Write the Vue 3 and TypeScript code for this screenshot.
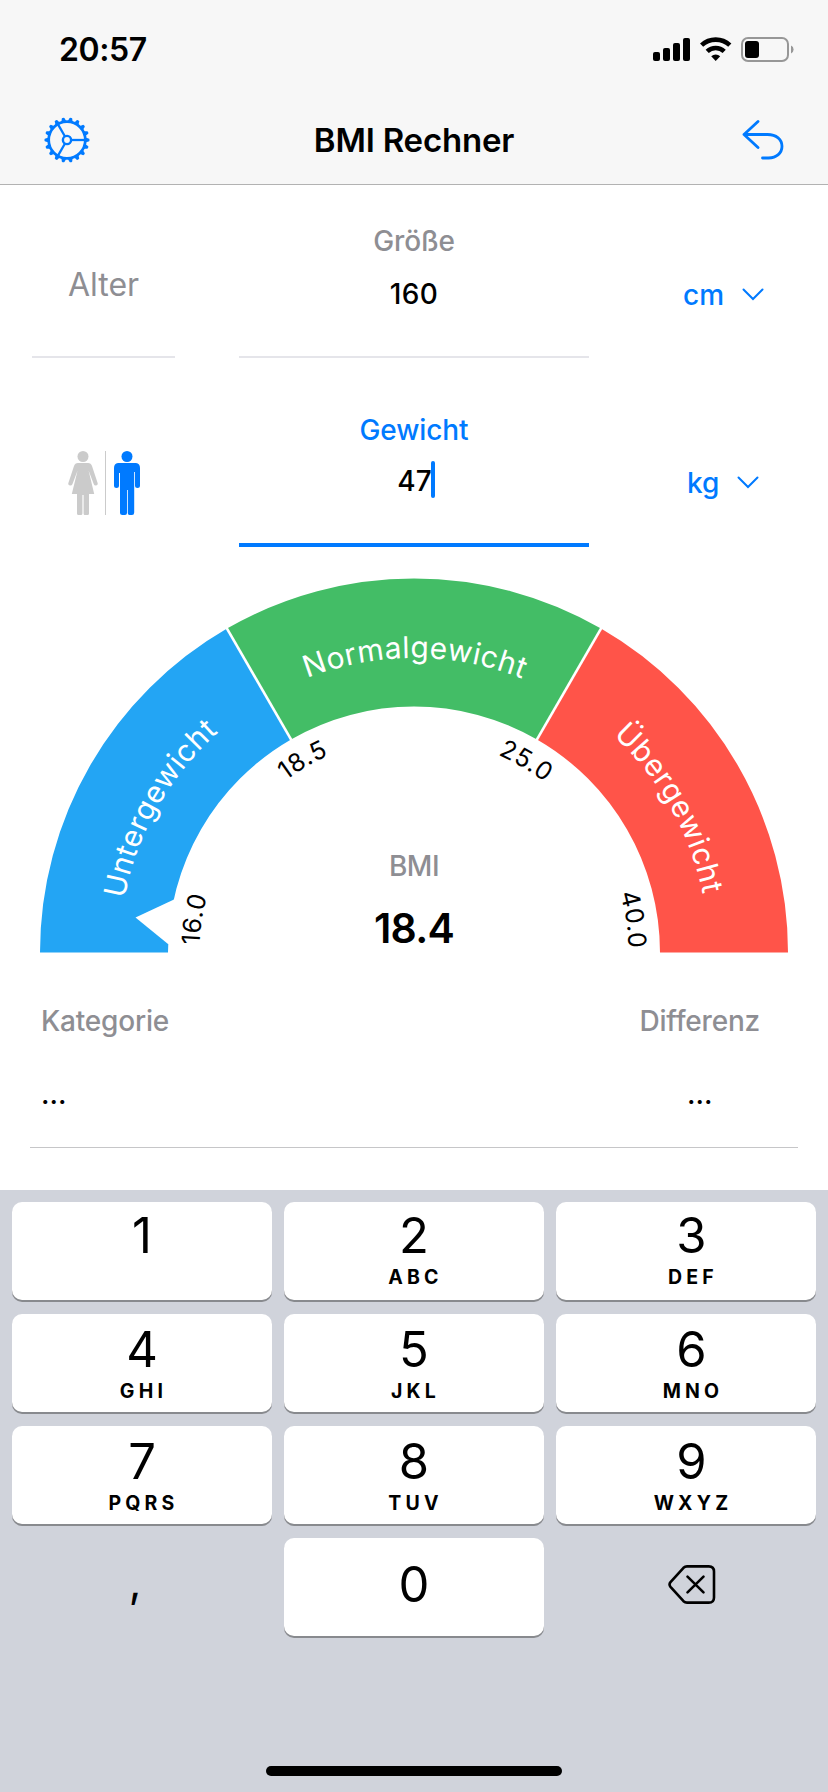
<script setup lang="ts">
interface PadKey {
  digit: string
  letters: string
}

interface Mark {
  text: string
  angle: number
}

const keys: PadKey[] = [
  { digit: '1', letters: '' },
  { digit: '2', letters: 'ABC' },
  { digit: '3', letters: 'DEF' },
  { digit: '4', letters: 'GHI' },
  { digit: '5', letters: 'JKL' },
  { digit: '6', letters: 'MNO' },
  { digit: '7', letters: 'PQRS' },
  { digit: '8', letters: 'TUV' },
  { digit: '9', letters: 'WXYZ' },
]

// Gauge geometry: angles run in degrees from the left end of the half circle.
const cx = 374
const cy = 374.5
const outer = 374
const inner = 246

function point(radius: number, angle: number): string {
  const a = (angle * Math.PI) / 180
  return `${(cx - radius * Math.cos(a)).toFixed(2)} ${(cy - radius * Math.sin(a)).toFixed(2)}`
}

function sector(from: number, to: number): string {
  return `M${point(outer, from)} A${outer} ${outer} 0 0 1 ${point(outer, to)} L${point(inner, to)} A${inner} ${inner} 0 0 0 ${point(inner, from)} Z`
}

function arc(radius: number, centre: number): string {
  return `M${point(radius, centre - 40)} A${radius} ${radius} 0 0 1 ${point(radius, centre + 40)}`
}

function divider(angle: number): string {
  return `M${point(inner - 2, angle)} L${point(outer + 2, angle)}`
}

const sectors = [
  { id: 'under', text: 'Untergewicht', from: 0, to: 60, label: 29.5, color: '#23a5f4' },
  { id: 'normal', text: 'Normalgewicht', from: 60, to: 120, label: 90.2, color: '#43bd66' },
  { id: 'over', text: 'Übergewicht', from: 120, to: 180, label: 150.6, color: '#ff5449' },
]

const marks: Mark[] = [
  { text: '16.0', angle: 8.7 },
  { text: '18.5', angle: 60 },
  { text: '25.0', angle: 120.4 },
  { text: '40.0', angle: 171.5 },
]

const teeth = Array.from({ length: 18 }, (_, i) => i * 20)
</script>

<template>
  <div class="screen">
    <header class="top">
      <div class="status">
        <span class="time">20:57</span>
        <svg class="indicators" width="144" height="28" viewBox="0 0 144 28">
          <rect x="3" y="16" width="7" height="9" rx="2" />
          <rect x="13" y="12" width="7" height="13" rx="2" />
          <rect x="23" y="7" width="7" height="18" rx="2" />
          <rect x="33" y="2" width="7" height="23" rx="2" />
          <g fill="none" stroke="#000" stroke-width="4.6">
            <path d="M51.6 9.2 A20.5 20.5 0 0 1 79.8 9.2" />
            <path d="M57.2 15.4 A12.4 12.4 0 0 1 74.2 15.4" />
          </g>
          <path d="M61.2 20.2 A7 7 0 0 1 70.2 20.2 L65.7 24.9 Z" />
          <rect x="92" y="2" width="46" height="23" rx="6" fill="none" stroke="#979797" stroke-width="2" />
          <rect x="95" y="5" width="14" height="17" rx="3" />
          <path d="M141 9.5 A4.4 4.4 0 0 1 141 17.5 Z" fill="#979797" />
        </svg>
      </div>
      <div class="navbar">
        <svg class="gear" width="48" height="48" viewBox="-24 -24 48 48">
          <g fill="#007aff">
            <path
              v-for="t in teeth"
              :key="t"
              d="M18.5 -2.5 L22.2 -1.300 Q23 0 22.2 1.300 L18.5 2.5 Z"
              :transform="`rotate(${t})`"
            />
          </g>
          <circle r="18.3" fill="#f7f7f7" stroke="#007aff" stroke-width="2.7" />
          <g stroke="#007aff" stroke-width="2.3">
            <path v-for="a in [0, 120, 240]" :key="a" d="M4 0 H18" :transform="`rotate(${a})`" />
          </g>
          <circle r="4.1" fill="#f7f7f7" stroke="#007aff" stroke-width="2.4" />
        </svg>
        <h1>BMI Rechner</h1>
        <svg class="undo" width="44" height="42" viewBox="0 0 44 42">
          <path
            d="M17 2.5 L3 15.5 L17 28.5 M3 15.5 H26.5 C35.5 15.5 41 20.5 41 27.2 C41 34 35.5 39 27.5 39 H21.5"
            fill="none" stroke="#007aff" stroke-width="2.8" stroke-linecap="round" stroke-linejoin="round"
          />
        </svg>
      </div>
    </header>

    <section class="form">
      <div class="age">Alter</div>
      <div class="field">
        <label>Größe</label>
        <span class="value">160</span>
      </div>
      <div class="unit unit-cm">
        <span>cm</span>
        <svg width="22" height="14" viewBox="0 0 22 14"><path d="M1.5 1.5 L11 11 L20.5 1.5" /></svg>
      </div>

      <div class="gender">
        <svg width="74" height="66" viewBox="0 0 74 66">
          <g fill="#cbcbcb">
            <circle cx="16" cy="6.5" r="5.5" />
            <path d="M11 13 H21 Q24 13 25 16 L30.7 33.2 Q31 35 29 35.5 Q27.4 35.7 26.7 34 L21.6 20.5 L27.2 44 H22 V63.5 Q22 65 20.5 65 H17.8 Q16.6 65 16.6 63.5 V45 H15.4 V63.5 Q15.4 65 14 65 H11.5 Q10 65 10 63.5 V44 H4.8 L10.6 20.5 L5.5 34 Q4.8 35.7 3 35.5 Q1 35 1.3 33.2 L7 16 Q8 13 11 13 Z" />
            <rect x="38" y="1" width="1" height="64" />
          </g>
          <g fill="#007aff">
            <circle cx="60" cy="6.5" r="5.5" />
            <path d="M51 13 H69 Q73 13.600 73 18 V35.500 Q73 38 70.500 38 Q68 38 68 35.500 V22 H67.200 V62.500 Q67.200 65 65 65 H62.500 Q60.800 65 60.800 63 V40 H60 V63 Q60 65 58 65 H55.500 Q53 65 53 62.500 V23 H52 V35.500 Q52 38 49.500 38 Q47 38 47 35.500 V18 Q47 13.600 51 13 Z" />
          </g>
        </svg>
      </div>
      <div class="field active">
        <label>Gewicht</label>
        <span class="value">47<i class="caret" /></span>
      </div>
      <div class="unit unit-kg">
        <span>kg</span>
        <svg width="22" height="14" viewBox="0 0 22 14"><path d="M1.5 1.5 L11 11 L20.5 1.5" /></svg>
      </div>
    </section>

    <section class="gauge">
      <svg width="748" height="375" viewBox="0 0 748 375">
        <defs>
          <path v-for="s in sectors" :id="s.id" :key="s.id" :d="arc(294.5, s.label)" />
          <path v-for="(m, i) in marks" :id="`mark${i}`" :key="i" :d="arc(214.6, m.angle)" />
        </defs>
        <path v-for="s in sectors" :key="s.id" :d="sector(s.from, s.to)" :fill="s.color" />
        <path v-for="a in [60, 120]" :key="a" :d="divider(a)" stroke="#fff" stroke-width="2.6" />
        <path d="M134 321.500 L95.500 339.500 L128 366 H140 V321 Z" fill="#fff" />
        <text v-for="s in sectors" :key="s.id" class="band">
          <textPath :href="`#${s.id}`" startOffset="50%">{{ s.text }}</textPath>
        </text>
        <text v-for="(m, i) in marks" :key="i" class="mark">
          <textPath :href="`#mark${i}`" startOffset="50%">{{ m.text }}</textPath>
        </text>
      </svg>
      <div class="reading">
        <span class="reading-label">BMI</span>
        <strong>18.4</strong>
      </div>
    </section>

    <section class="result">
      <div class="col">
        <span class="head">Kategorie</span>
        <span class="dots">...</span>
      </div>
      <div class="col right">
        <span class="head">Differenz</span>
        <span class="dots">...</span>
      </div>
    </section>

    <section class="keyboard">
      <div class="pad">
        <button
          v-for="(k, i) in keys"
          :key="k.digit"
          :class="['key', { first: i < 3, last: i % 3 === 2 }]"
        >
          <span class="digit">{{ k.digit }}</span>
          <span class="letters">{{ k.letters }}</span>
        </button>
        <button class="key plain"><span class="comma">,</span></button>
        <button class="key zero"><span class="digit">0</span></button>
        <button class="key plain">
          <svg class="backspace" width="50" height="42" viewBox="0 0 50 42">
            <g fill="none" stroke="#000" stroke-width="2.6" stroke-linecap="round" stroke-linejoin="round">
              <path d="M20 2.400 H41.800 Q47 2.400 47 7.600 V33.400 Q47 38.600 41.800 38.600 H20 Q18 38.600 16.500 37.200 L3.500 22.800 Q1.600 20.500 3.500 18.200 L16.500 3.800 Q18 2.400 20 2.400 Z" />
              <path d="M20.500 12.600 L36.500 28.400 M36.500 12.600 L20.500 28.400" />
            </g>
          </svg>
        </button>
      </div>
      <div class="home" />
    </section>
  </div>
</template>

<style>
body {
  margin: 0;
  background: #fff;
}
</style>

<style scoped>
.screen {
  width: 828px;
  height: 1792px;
  background: #fff;
  color: #000;
  font-family: Inter, "Liberation Sans", sans-serif;
  display: flex;
  flex-direction: column;
  overflow: hidden;
}
.screen svg {
  display: block;
  flex: none;
}
.top {
  height: 184px;
  background: #f7f7f7;
  border-bottom: 1px solid #b2b2b2;
}
.status {
  height: 96px;
  padding: 0 34px 0 59px;
  display: flex;
  justify-content: space-between;
}
.time {
  margin-top: 30px;
  font-size: 32px;
  line-height: 40px;
  font-weight: 600;
  letter-spacing: -0.4px;
}
.indicators {
  margin-top: 36px;
}
.navbar {
  height: 88px;
  padding: 0 43px;
  display: grid;
  grid-template-columns: 48px 1fr 48px;
  align-items: center;
}
h1 {
  margin: 0;
  text-align: center;
  font-size: 33px;
  line-height: 40px;
  font-weight: 600;
  letter-spacing: -0.2px;
}
.undo {
  justify-self: end;
}
.form {
  height: 362px;
  display: grid;
  grid-template-columns: 143px 350px 1fr;
  column-gap: 64px;
  grid-template-rows: 173px 189px;
  padding-left: 32px;
}
.age {
  border-bottom: 2px solid #e5e5ea;
  text-align: center;
  color: #8e8e93;
  font-size: 32px;
  line-height: 40px;
  padding-top: 80px;
}
.field {
  border-bottom: 2px solid #e5e5ea;
  display: flex;
  flex-direction: column;
  align-items: center;
  font-size: 28px;
  line-height: 36px;
}
.field label {
  margin-top: 38px;
  color: #8e8e93;
  font-weight: 500;
  letter-spacing: -0.1px;
}
.field .value {
  margin-top: 17px;
  font-weight: 500;
  letter-spacing: 0.4px;
  display: flex;
  align-items: center;
}
.field.active {
  border-bottom: 4px solid #007aff;
}
.field.active label {
  margin-top: 54px;
  color: #007aff;
}
.field.active .value {
  margin-top: 15px;
  letter-spacing: 0;
}
.caret {
  width: 4px;
  height: 37px;
  margin: -3px -4px 0 -1px;
  border-radius: 2px;
  background: #007aff;
}
.unit {
  display: flex;
  align-items: flex-start;
  color: #007aff;
  font-size: 28px;
  line-height: 36px;
  font-weight: 500;
}
.unit svg path {
  fill: none;
  stroke: #007aff;
  stroke-width: 2;
  stroke-linecap: round;
}
.unit-cm {
  padding: 92px 0 0 30px;
}
.unit-cm svg {
  margin: 11px 0 0 18px;
}
.unit-kg {
  padding: 107px 0 0 34px;
}
.unit-kg svg {
  margin: 11px 0 0 18px;
}
.gender {
  padding: 92px 0 0 35px;
}
.gauge {
  height: 375px;
  margin: 31px 40px 0;
  display: grid;
}
.gauge > * {
  grid-area: 1 / 1;
}
.band {
  fill: #fff;
  font-size: 30px;
  text-anchor: middle;
  letter-spacing: 0.45px;
}
.mark {
  fill: #000;
  font-size: 25px;
  text-anchor: middle;
  letter-spacing: 0.8px;
}
.reading {
  display: flex;
  flex-direction: column;
  align-items: center;
  padding-top: 270px;
}
.reading-label {
  color: #8e8e93;
  font-size: 28px;
  line-height: 36px;
  font-weight: 500;
  letter-spacing: -0.5px;
}
.reading strong {
  font-size: 41px;
  line-height: 50px;
  font-weight: 600;
  margin-top: 19px;
  letter-spacing: -0.8px;
}
.result {
  height: 194px;
  margin: 0 30px 42px;
  border-bottom: 1px solid #c6c6c8;
  display: flex;
  justify-content: space-between;
  padding: 0 38px 0 11px;
}
.col {
  display: flex;
  flex-direction: column;
}
.col.right {
  align-items: center;
}
.head {
  margin-top: 50px;
  color: #8e8e93;
  font-size: 28px;
  line-height: 36px;
  font-weight: 500;
  letter-spacing: -0.2px;
}
.dots {
  margin-top: 37px;
  font-size: 28px;
  line-height: 36px;
  font-weight: 500;
}
.keyboard {
  flex: 1;
  background: #d0d3db;
}
.pad {
  padding: 12px 12px 0;
  display: grid;
  grid-template-columns: repeat(3, 260px);
  grid-auto-rows: 98px;
  gap: 14px 12px;
}
.key {
  border: 0;
  margin: 0;
  padding: 7px 0 0;
  border-radius: 10px;
  background: #fff;
  box-shadow: 0 2px 0 #888a8e;
  font-family: inherit;
  color: #000;
  display: flex;
  flex-direction: column;
  align-items: center;
  justify-content: flex-start;
}
.key.first {
  padding-top: 5px;
}
.key.last {
  padding-left: 11px;
}
.digit {
  font-size: 49px;
  line-height: 58px;
}
.letters {
  font-size: 19.5px;
  line-height: 24px;
  font-weight: 700;
  letter-spacing: 4.2px;
  margin-top: 0;
  margin-right: -3px;
}
.key.zero {
  padding-top: 18px;
}
.key.plain {
  background: none;
  box-shadow: none;
}
.comma {
  font-size: 44px;
  line-height: 58px;
  margin: 7px 14px 0 0;
}
.backspace {
  margin: 19px 0 0 11px;
}
.home {
  width: 296px;
  height: 10px;
  border-radius: 5px;
  background: #000;
  margin: 130px auto 0;
}
</style>
